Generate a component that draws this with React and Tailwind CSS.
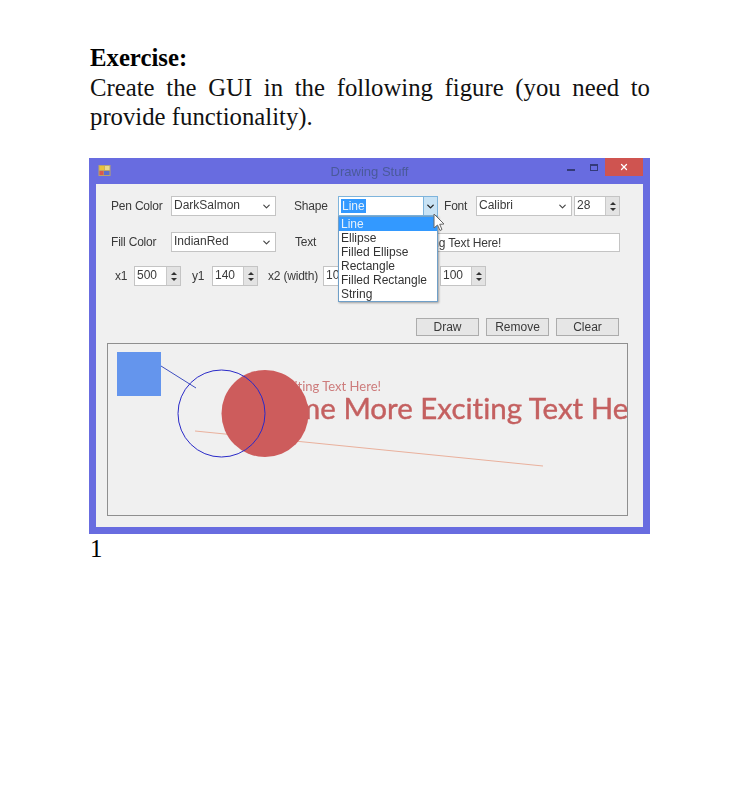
import React from 'react';
import { ChevronDown, X } from 'lucide-react';

const ui = "font-['Liberation_Sans',Arial,sans-serif] text-[12px] text-[#3a3a3a]";

const Label = ({ width, text, className = '' }) => (
  <span className={`shrink-0 whitespace-nowrap tracking-[-0.2px] ${width} ${className}`}>{text}</span>
);

const Combo = ({ width, value }) => (
  <div className={`${width} h-5 shrink-0 bg-white border border-[#c4c4c4] flex items-center justify-between pl-[2px] pr-[3px]`}>
    <span className="-mt-[2px]">{value}</span>
    <ChevronDown size={11} strokeWidth={2.5} className="text-[#444]" />
  </div>
);

const Spinner = ({ value, width = 'w-[46px]', className = '' }) => (
  <div className={`${width} ${className} h-5 shrink-0 bg-white border border-[#c4c4c4] flex justify-between`}>
    <span className="pl-[2px] -mt-[1px]">{value}</span>
    <div className="w-[14px] bg-[#e3e3e3] border-l border-[#c9c9c9] flex flex-col items-center justify-center gap-[3px]">
      <div className="w-0 h-0 border-x-[3px] border-x-transparent border-b-[3px] border-b-[#333]" />
      <div className="w-0 h-0 border-x-[3px] border-x-transparent border-t-[3px] border-t-[#333]" />
    </div>
  </div>
);

const Button = ({ width, label }) => (
  <button className={`${width} h-[18px] bg-[#e6e6e6] border border-[#acacac] flex items-center justify-center text-[12px] text-[#3a3a3a]`}>
    {label}
  </button>
);

const AppIcon = () => (
  <svg width="13" height="13" viewBox="0 0 13 13">
    <rect x="0.5" y="1" width="12" height="11" fill="#b9a36c" />
    <rect x="1.5" y="2" width="5" height="4" fill="#e9c23a" />
    <rect x="7" y="2" width="4.5" height="4" fill="#e8d98a" />
    <rect x="1.5" y="7" width="4" height="4" fill="#d9584f" />
    <rect x="6" y="7" width="5.5" height="4" fill="#5b6fd0" />
  </svg>
);

const Cursor = () => (
  <svg width="12" height="19" viewBox="0 0 12 19" className="absolute left-[344px] top-[55px]">
    <path d="M1 1 L1 15 L4.5 12 L7 17.5 L9 16.5 L6.7 11.3 L11 11 Z" fill="#fff" stroke="#666" strokeWidth="1" strokeLinejoin="round" />
  </svg>
);

const shapeItems = ['Line', 'Ellipse', 'Filled Ellipse', 'Rectangle', 'Filled Rectangle', 'String'];

const ShapeList = () => (
  <div className="absolute left-[249px] top-[58px] w-[100px] h-[86px] bg-white border border-[#6f9fc8] shadow-[1px_1px_2px_rgba(0,0,0,0.35)] leading-[14px] text-[#333]">
    {shapeItems.map((item, index) => (
      <div key={item} className={index === 0 ? 'h-[14px] pl-[2px] bg-[#3399ff] text-[#e6f1fb]' : 'h-[14px] pl-[2px]'}>
        {item}
      </div>
    ))}
  </div>
);

const Canvas = () => (
  <svg width="519" height="171" viewBox="108 344 519 171" className="block [font-variant-ligatures:none]">
    <rect x="117" y="352" width="44" height="44" fill="#6495ed" />
    <line x1="161" y1="366" x2="196" y2="388" stroke="#3f4fc0" strokeWidth="1" />
    <line x1="195" y1="431" x2="543" y2="466" stroke="#e9b09c" strokeWidth="1" />
    <text x="381" y="391" textAnchor="end" fontFamily="Lato, sans-serif" fontSize="13" fill="#cd7c7c">Some Exciting Text Here!</text>
    <text x="662" y="419" textAnchor="end" fontFamily="Lato, sans-serif" fontSize="29.5" fill="#c46060" stroke="#c46060" strokeWidth="0.4">Some More Exciting Text Here!</text>
    <circle cx="265" cy="413.5" r="43.5" fill="#cd5c5c" />
    <circle cx="221.5" cy="413.5" r="43.5" fill="none" stroke="#2a2ac8" strokeWidth="1" />
  </svg>
);

const DrawingWindow = () => (
  <div className={`relative w-[561px] h-[376px] bg-[#686ce0] px-[7px] pb-[7px] flex flex-col blur-[0.35px] ${ui}`}>
    <div className="h-[26px] -mx-[7px] grid grid-cols-[1fr_auto_1fr] items-start">
      <div className="pt-[6px] pl-[9px]"><AppIcon /></div>
      <div className="pt-[4px] text-[#4a5a9a] text-[13px]">Drawing Stuff</div>
      <div className="flex justify-end items-start pr-[7px]">
        <div className="w-[8px] h-[2px] mt-[11px] mr-[15px] bg-[#333a78]" />
        <div className="w-[8px] h-[7px] mt-[6px] mr-[7px] border border-[#333a78] border-t-2" />
        <div className="w-[38px] h-[18px] bg-[#cf5450] flex items-center justify-center">
          <X size={10} strokeWidth={3} className="text-white" />
        </div>
      </div>
    </div>

    <div className="flex-1 bg-[#f0f0f0] pt-3 flex flex-col">
      <div className="h-5 pl-[15px] flex items-center">
        <Label width="w-[60px]" text="Pen Color" />
        <Combo width="w-[105px]" value="DarkSalmon" />
        <Label width="w-[44px]" text="Shape" className="ml-[18px]" />
        <div className="w-[100px] h-5 shrink-0 bg-white border border-[#7eb4dc] flex justify-between">
          <span className="ml-[2px] my-[2px] px-[1px] bg-[#3399ff] text-[#e6f1fb] leading-[14px]">Line</span>
          <div className="w-[14px] bg-[#c9e3f5] border-l border-[#7eb4dc] flex items-center justify-center">
            <ChevronDown size={11} strokeWidth={3} className="text-[#222]" />
          </div>
        </div>
        <Label width="w-[32px]" text="Font" className="ml-[6px]" />
        <Combo width="w-[96px]" value="Calibri" />
        <Spinner value="28" className="ml-[2px]" />
      </div>

      <div className="h-5 mt-4 pl-[15px] flex items-center">
        <Label width="w-[60px]" text="Fill Color" />
        <Combo width="w-[105px]" value="IndianRed" />
        <Label width="w-[43px]" text="Text" className="ml-[19px]" />
        <div className="w-[282px] h-[19px] bg-white border border-[#c4c4c4] pl-[2px] tracking-[-0.17px]">Some More Exciting Text Here!</div>
      </div>

      <div className="h-5 mt-[14px] pl-[19px] flex items-center">
        <Label width="w-[19px]" text="x1" />
        <Spinner value="500" width="w-[47px]" />
        <Label width="w-[20px]" text="y1" className="ml-[11px]" />
        <Spinner value="140" />
        <Label width="w-[55px]" text="x2 (width)" className="ml-[10px]" />
        <Spinner value="100" width="w-[47px]" />
        <Label width="w-[65px]" text="y2 (height)" className="ml-[5px]" />
        <Spinner value="100" />
      </div>

      <div className="mt-8 pr-6 flex justify-end gap-[7px]">
        <Button width="w-[63px]" label="Draw" />
        <Button width="w-[63px]" label="Remove" />
        <Button width="w-[63px]" label="Clear" />
      </div>

      <div className="mt-[7px] ml-[11px] w-[521px] h-[173px] border border-[#8f8f8f] overflow-hidden">
        <Canvas />
      </div>
    </div>

    <ShapeList />
    <Cursor />
  </div>
);

export default function App() {
  return (
    <div className="min-h-[794px] bg-white pl-[89px] pt-[43px] font-['Liberation_Serif','Times_New_Roman',serif] text-black">
      <div className="w-[561px]">
        <h1 className="text-[24.75px] leading-[30px] font-bold pl-[1px]">Exercise:</h1>
        <p className="text-[24.75px] leading-[29px] text-justify pl-[1px] text-[#111]">
          Create the GUI in the following figure (you need to provide functionality).
        </p>
      </div>
      <div className="mt-[27px]">
        <DrawingWindow />
      </div>
      <div className="text-[24.75px] leading-[29px] pl-[1px]">1</div>
    </div>
  );
}
